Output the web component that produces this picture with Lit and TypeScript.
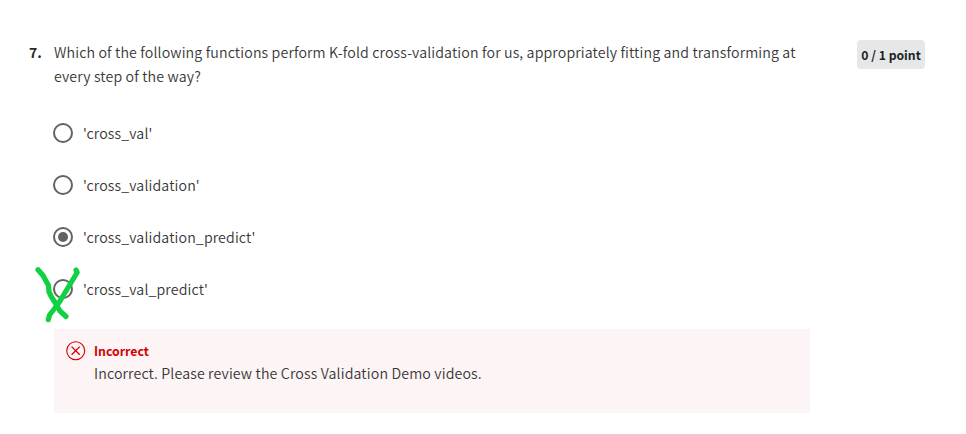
import { LitElement, html, css, svg } from "lit";
import { customElement, property } from "lit/decorators.js";

@customElement("quiz-option")
class QuizOption extends LitElement {
  @property() label = "";
  @property({ type: Boolean }) checked = false;
  @property({ type: Boolean }) marked = false;

  static styles = css`
    :host { display: flex; align-items: center; height: 52px; }
    .control { position: relative; flex: none; width: 20px; height: 20px; margin-right: 10px; }
    .ring { display: block; width: 20px; height: 20px; }
    .scribble { position: absolute; left: -19px; top: -14px; width: 48px; height: 60px; }
    .label { white-space: nowrap; line-height: 24px; }
  `;

  render() {
    return html`
      <span class="control">
        <svg class="ring" viewBox="0 0 20 20">
          <circle cx="10" cy="10" r="9" fill="none" stroke="#636363" stroke-width="2" />
          ${this.checked ? svg`<circle cx="10" cy="10" r="5" fill="#636363" />` : null}
        </svg>
        ${this.marked
          ? html`<svg class="scribble" viewBox="34 265 48 60" fill="none" stroke="#0fd142" stroke-width="5.2" stroke-linecap="round" stroke-linejoin="round">
              <path d="M38 269.7L43 275.5L48.5 285.5L49 292L51.5 297L56 304L60 311L66 316.5" />
              <path d="M76 270L77.2 272.5L72 281L66 291L60 301L55 308L49.5 315L48.3 319.7" />
            </svg>`
          : null}
      </span>
      <span class="label">${this.label}</span>
    `;
  }
}

@customElement("app-root")
class AppRoot extends LitElement {
  static styles = css`
    :host {
      display: block; box-sizing: border-box; width: 966px; height: 434px; padding: 40px 41px 0 29px;
      background: #fff; color: #373737; overflow: hidden;
      font-family: "Noto Sans CJK SC DemiLight", "Noto Sans CJK SC", sans-serif; font-size: 14.2px; line-height: 24px; font-weight: 350;
      letter-spacing: 0.136px;
    }
    .number, .points, .title { font-family: "Noto Sans CJK SC", sans-serif; font-weight: 700; letter-spacing: 0; }
    .question { display: flex; align-items: flex-start; }
    .number { width: 25px; flex: none; font-size: 14px; color: #2a2a2a; }
    .prompt { width: 756px; }
    .line { display: block; white-space: nowrap; }
    .points {
      margin-left: auto; width: 68px; height: 29px; border-radius: 4px; background: #e5e7e8;
      text-align: center; font-size: 12.2px; line-height: 30px; color: #1f1f1f; white-space: nowrap;
    }
    .options { display: block; margin: 19px 0 0 24px; }
    .feedback {
      display: flex; box-sizing: border-box; width: 756px; height: 84px; margin: 14px 0 0 25px;
      padding: 12px 12px 0; background: #fdf4f5;
    }
    .error { flex: none; width: 20px; height: 20px; margin-right: 8px; }
    .title { color: #d30001; font-size: 12.3px; line-height: 20px; }
    .message { white-space: nowrap; }
  `;

  render() {
    return html`
      <div class="question">
        <span class="number">7.</span>
        <div class="prompt">
          <span class="line">Which of the following functions perform K-fold cross-validation for us, appropriately fitting and transforming at</span>
          <span class="line">every step of the way?</span>
        </div>
        <span class="points">0 / 1 point</span>
      </div>
      <div class="options">
        <quiz-option label="'cross_val'"></quiz-option>
        <quiz-option label="'cross_validation'"></quiz-option>
        <quiz-option label="'cross_validation_predict'" checked></quiz-option>
        <quiz-option label="'cross_val_predict'" marked></quiz-option>
      </div>
      <div class="feedback">
        <svg class="error" viewBox="0 0 20 20" fill="none" stroke="#d30001">
          <circle cx="9.7" cy="9.7" r="9" stroke-width="1.1" />
          <path d="M5.6 5.6L13.8 13.8M13.8 5.6L5.6 13.8" stroke-width="1.3" />
        </svg>
        <div>
          <div class="title">Incorrect</div>
          <div class="message">Incorrect. Please review the Cross Validation Demo videos.</div>
        </div>
      </div>
    `;
  }
}
